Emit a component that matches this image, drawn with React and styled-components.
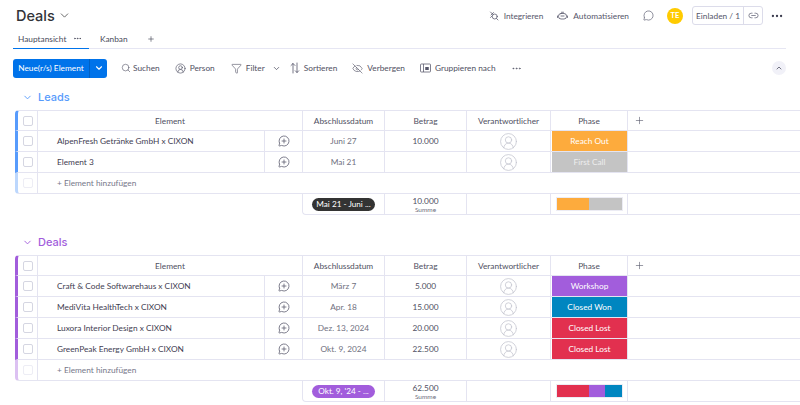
import React from "react";
import styled, { createGlobalStyle } from "styled-components";
import {
  ChevronDown, ChevronUp, CircleUserRound, EyeOff, Funnel, Link2,
  MessageCircle, MessageCirclePlus, MoreHorizontal, Plus, Search,
} from "lucide-react";

const GlobalStyle = createGlobalStyle`
  * { box-sizing: border-box; }
  html, body { margin: 0; background: #fff; }
  body { font-family: "Lato", "Noto Sans", sans-serif; color: #3b3c4e; }
`;

const Page = styled.div`
  width: 800px;
  height: 405px;
  overflow: hidden;
`;

const TopBar = styled.div`
  height: 31px;
  display: flex;
  align-items: center;
  padding: 0 16px 0 16px;
`;

const Title = styled.h1`
  margin: 0;
  font-family: "Inter", sans-serif;
  font-size: 14.5px;
  line-height: 24px;
  font-weight: 500;
  color: #323338;
`;

const TitleCaret = styled(ChevronDown)`
  margin-left: 3px;
  color: #555;
`;

const TopActions = styled.div`
  margin-left: auto;
  display: flex;
  align-items: center;
`;

const TopAction = styled.div`
  display: flex;
  align-items: center;
  gap: 5px;
  margin-right: ${(p) => p.$gap}px;
  font-size: 8.3px;
  color: #55566a;
  white-space: nowrap;
`;

const Avatar = styled.div`
  width: 16px;
  height: 16px;
  margin: 0 9px 0 13px;
  border-radius: 50%;
  background: #ffcb00;
  color: #fff;
  font-size: 7.5px;
  font-weight: 700;
  display: flex;
  align-items: center;
  justify-content: center;
`;

const InviteBox = styled.div`
  width: 71px;
  height: 19px;
  display: flex;
  border: 1px solid #dcdcea;
  border-radius: 3px;
  font-size: 8.3px;
  color: #55566a;
`;

const InviteLabel = styled.div`
  flex: 1;
  display: flex;
  align-items: center;
  justify-content: center;
  white-space: nowrap;
  border-right: 1px solid #dcdcea;
`;

const InviteLink = styled.div`
  width: 18px;
  display: flex;
  align-items: center;
  justify-content: center;
`;

const MoreDots = styled(MoreHorizontal)`
  margin: 0 0 0 7px;
  color: #3b3c4e;
`;

const Tabs = styled.div`
  height: 18px;
  margin: 0 14px 0 13px;
  display: flex;
  align-items: flex-start;
  border-bottom: 1px solid #e6e6f3;
  font-size: 8.3px;
  color: #4a4b5c;
`;

const Tab = styled.div`
  height: 18px;
  width: ${(p) => p.$width}px;
  display: flex;
  align-items: center;
  gap: 7px;
  padding-left: ${(p) => p.$pad}px;
  padding-bottom: 2px;
  border-bottom: ${(p) => (p.$active ? "1px solid #0073ea" : "none")};
`;

const Toolbar = styled.div`
  height: 20px;
  margin: 9px 14px 0 13px;
  display: flex;
  align-items: center;
  font-size: 8.3px;
  color: #4f5062;
`;

const PrimaryButton = styled.div`
  width: 94px;
  height: 19px;
  display: flex;
  background: #0073ea;
  border-radius: 3px;
  color: #fff;
  font-size: 8.3px;
  margin-right: 14px;
`;

const PrimaryLabel = styled.div`
  width: 77px;
  display: flex;
  align-items: center;
  justify-content: center;
  white-space: nowrap;
  border-right: 1px solid #0060c4;
`;

const PrimaryCaret = styled.div`
  flex: 1;
  display: flex;
  align-items: center;
  justify-content: center;
`;

const ToolItem = styled.div`
  display: flex;
  align-items: center;
  gap: ${(p) => p.$inner ?? 4}px;
  margin-right: ${(p) => p.$gap}px;
  white-space: nowrap;
`;

const FilterCaret = styled(ChevronDown)`
  margin-left: 3px;
`;

const Collapse = styled.div`
  margin-left: auto;
  width: 14px;
  height: 14px;
  border-radius: 50%;
  background: #f1f1f8;
  display: flex;
  align-items: center;
  justify-content: center;
  color: #4f5062;
`;

const GroupHead = styled.div`
  height: 20px;
  display: flex;
  align-items: center;
  padding-left: 22px;
  color: ${(p) => p.$color};
  font-family: "Inter", sans-serif;
  font-size: 11px;
  font-weight: 500;
  gap: 5px;
`;

const Group = styled.section`
  margin-top: ${(p) => p.$top}px;
`;

const Table = styled.div`
  margin: 3px 0 0 15px;
`;

const Row = styled.div`
  height: 21px;
  display: grid;
  grid-template-columns: 20px 227px 38px 82px 82px 84px 77px 1fr;
  border-left: 3px solid ${(p) => p.$bar};
  border-bottom: 1px solid #e4e4f1;
  border-top: ${(p) => (p.$head ? "1px solid #e4e4f1" : "none")};
  border-top-left-radius: ${(p) => (p.$head ? "4px" : 0)};
  border-bottom-left-radius: ${(p) => (p.$last ? "4px" : 0)};
  font-size: 8.3px;
  color: #4f5062;
`;

const Cell = styled.div`
  display: flex;
  align-items: center;
  justify-content: center;
  border-right: 1px solid #e4e4f1;
  white-space: nowrap;
  min-width: 0;
  grid-column: ${(p) => p.$span || "auto"};
`;

const NameCell = styled(Cell)`
  justify-content: flex-start;
  padding-left: 19px;
  color: #3f4052;
`;

const DateCell = styled(Cell)`
  color: #6f7080;
`;

const OpenCell = styled.div`
  display: flex;
  align-items: center;
  padding-left: 5px;
`;

const AddCell = styled(NameCell)`
  grid-column: 2 / -1;
  border-right: none;
  color: #77788a;
`;

const Check = styled.span`
  width: 10px;
  height: 10px;
  border: 1px solid ${(p) => (p.$faint ? "#ededf5" : "#d5d6e2")};
  border-radius: 2px;
  background: #fff;
`;

const Status = styled.div`
  flex: 1;
  display: flex;
  align-items: center;
  justify-content: center;
  margin-left: 1px;
  white-space: nowrap;
  background: ${(p) => p.$color};
  color: ${(p) => (p.$muted ? "#eeeeee" : "#fff")};
`;

const PhaseWrap = styled.div`
  display: flex;
  border-right: 1px solid #e4e4f1;
`;

const SummaryRow = styled.div`
  height: 21px;
  margin-left: 287px;
  display: grid;
  grid-template-columns: 82px 82px 84px 77px 1fr;
  border-bottom: 1px solid #e4e4f1;
  border-left: 1px solid #e4e4f1;
  border-bottom-left-radius: 4px;
`;

const Pill = styled.span`
  width: 63px;
  height: 13px;
  border-radius: 7px;
  background: ${(p) => p.$color};
  color: #fff;
  font-size: 8.2px;
  display: flex;
  align-items: center;
  justify-content: center;
  white-space: nowrap;
`;

const SumCell = styled(Cell)`
  flex-direction: column;
  font-size: 8.3px;
  line-height: 10px;
  color: #4f5062;
`;

const SumLabel = styled.span`
  font-size: 6.5px;
  line-height: 7px;
  color: #6d6e80;
`;

const Battery = styled.div`
  width: 67px;
  height: 14px;
  display: flex;
  border: 1px solid #ececf4;
`;

const Segment = styled.div`
  background: ${(p) => p.$color};
`;

const AddColumn = styled.div`
  display: flex;
  align-items: center;
  padding-left: 6px;
  color: #555668;
`;

const IntegrateIcon = () => (
  <svg width="10" height="10" viewBox="0 0 20 20" fill="none" stroke="#55566a" strokeWidth="1.5" strokeLinecap="round">
    <circle cx="11.5" cy="11" r="5" />
    <path d="M15 15l3 3M8 7L3 2M4 8l3-3M9 3l-2 2M3 13l3-3" />
  </svg>
);

const RobotIcon = () => (
  <svg width="11" height="10" viewBox="0 0 22 20" fill="none" stroke="#55566a" strokeWidth="1.6" strokeLinecap="round">
    <rect x="3" y="5" width="16" height="11" rx="5" />
    <path d="M1 10v3M21 10v3M8 10h6M9 2.5h4" />
  </svg>
);

const SortIcon = () => (
  <svg width="10" height="12" viewBox="0 0 20 24" fill="none" stroke="#55566a" strokeWidth="1.6" strokeLinecap="round" strokeLinejoin="round">
    <path d="M6 22V3M2 7l4-4 4 4M14 2v19M10.5 17.5L14 21l3.5-3.5" />
  </svg>
);

const GroupByIcon = () => (
  <svg width="11" height="10" viewBox="0 0 22 20" fill="none" stroke="#55566a" strokeWidth="1.5">
    <rect x="1" y="2" width="20" height="16" rx="1.5" />
    <path d="M7 2v16" />
    <rect x="10.5" y="8" width="7" height="6" fill="#55566a" stroke="none" />
  </svg>
);

const leads = [
  { name: "AlpenFresh Getränke GmbH x CIXON", date: "Juni 27", amount: "10.000", phase: "Reach Out", color: "#fdab3d" },
  { name: "Element 3", date: "Mai 21", amount: "", phase: "First Call", color: "#c4c4c4", muted: true },
];

const deals = [
  { name: "Craft & Code Softwarehaus x CIXON", date: "März 7", amount: "5.000", phase: "Workshop", color: "#a25ddc" },
  { name: "MediVita HealthTech x CIXON", date: "Apr. 18", amount: "15.000", phase: "Closed Won", color: "#0086c0" },
  { name: "Luxora Interior Design x CIXON", date: "Dez. 13, 2024", amount: "20.000", phase: "Closed Lost", color: "#e2304f" },
  { name: "GreenPeak Energy GmbH x CIXON", date: "Okt. 9, 2024", amount: "22.500", phase: "Closed Lost", color: "#e2304f" },
];

const BoardGroup = ({ title, color, faint, top, rows, range, pillColor, total, segments }) => (
  <Group $top={top}>
    <GroupHead $color={color}>
      <ChevronDown size={11} strokeWidth={2} />
      {title}
    </GroupHead>
    <Table>
      <Row $bar={color} $head>
        <Cell><Check /></Cell>
        <Cell $span="span 2">Element</Cell>
        <Cell>Abschlussdatum</Cell>
        <Cell>Betrag</Cell>
        <Cell>Verantwortlicher</Cell>
        <Cell>Phase</Cell>
        <AddColumn><Plus size={11} strokeWidth={1.3} /></AddColumn>
      </Row>
      {rows.map((row) => (
        <Row key={row.name} $bar={color}>
          <Cell><Check /></Cell>
          <NameCell>{row.name}</NameCell>
          <Cell><MessageCirclePlus size={12} strokeWidth={1.5} color="#55566a" /></Cell>
          <DateCell>{row.date}</DateCell>
          <Cell>{row.amount}</Cell>
          <Cell><CircleUserRound size={19} strokeWidth={1} color="#c5c6d0" /></Cell>
          <PhaseWrap>
            <Status $color={row.color} $muted={row.muted}>{row.phase}</Status>
          </PhaseWrap>
          <OpenCell />
        </Row>
      ))}
      <Row $bar={faint} $last>
        <Cell><Check $faint /></Cell>
        <AddCell>+ Element hinzufügen</AddCell>
      </Row>
      <SummaryRow>
        <Cell><Pill $color={pillColor}>{range}</Pill></Cell>
        <SumCell>
          {total}
          <SumLabel>Summe</SumLabel>
        </SumCell>
        <Cell />
        <Cell>
          <Battery>
            {segments.map((s) => (
              <Segment key={s.color} $color={s.color} style={{ width: `${s.share}%` }} />
            ))}
          </Battery>
        </Cell>
        <OpenCell />
      </SummaryRow>
    </Table>
  </Group>
);

export default function App() {
  return (
    <Page>
      <GlobalStyle />
      <TopBar>
        <Title>Deals</Title>
        <TitleCaret size={13} strokeWidth={1.6} />
        <TopActions>
          <TopAction $gap={14}><IntegrateIcon />Integrieren</TopAction>
          <TopAction $gap={14}><RobotIcon />Automatisieren</TopAction>
          <MessageCircle size={11} strokeWidth={1.4} color="#55566a" />
          <Avatar>TE</Avatar>
          <InviteBox>
            <InviteLabel>Einladen / 1</InviteLabel>
            <InviteLink><Link2 size={11} strokeWidth={1.5} /></InviteLink>
          </InviteBox>
          <MoreDots size={14} strokeWidth={2} />
        </TopActions>
      </TopBar>
      <Tabs>
        <Tab $active $width={76} $pad={5}>Hauptansicht <MoreHorizontal size={9} /></Tab>
        <Tab $width={50} $pad={11}>Kanban</Tab>
        <Tab $width={20} $pad={8}><Plus size={8} /></Tab>
      </Tabs>
      <Toolbar>
        <PrimaryButton>
          <PrimaryLabel>Neue(r/s) Element</PrimaryLabel>
          <PrimaryCaret><ChevronDown size={10} strokeWidth={2.6} /></PrimaryCaret>
        </PrimaryButton>
        <ToolItem $gap={15} $inner={2}><Search size={10} strokeWidth={1.4} />Suchen</ToolItem>
        <ToolItem $gap={16}><CircleUserRound size={11} strokeWidth={1.4} />Person</ToolItem>
        <ToolItem $gap={9}><Funnel size={11} strokeWidth={1.3} />Filter <FilterCaret size={9} /></ToolItem>
        <ToolItem $gap={15}><SortIcon />Sortieren</ToolItem>
        <ToolItem $gap={15}><EyeOff size={11} strokeWidth={1.3} />Verbergen</ToolItem>
        <ToolItem $gap={15}><GroupByIcon />Gruppieren nach</ToolItem>
        <MoreHorizontal size={11} strokeWidth={1.5} />
        <Collapse><ChevronUp size={8} strokeWidth={2.4} /></Collapse>
      </Toolbar>
      <BoardGroup
        title="Leads"
        color="#579bfc"
        faint="#bcd7fd"
        top={9}
        rows={leads}
        range="Mai 21 - Juni ..."
        pillColor="#333333"
        total="10.000"
        segments={[{ color: "#fdab3d", share: 50 }, { color: "#c4c4c4", share: 50 }]}
      />
      <BoardGroup
        title="Deals"
        color="#a25ddc"
        faint="#dcc1f2"
        top={17}
        rows={deals}
        range="Okt. 9, '24 - ..."
        pillColor="#a25ddc"
        total="62.500"
        segments={[{ color: "#e2304f", share: 50 }, { color: "#a25ddc", share: 25 }, { color: "#0086c0", share: 25 }]}
      />
    </Page>
  );
}
